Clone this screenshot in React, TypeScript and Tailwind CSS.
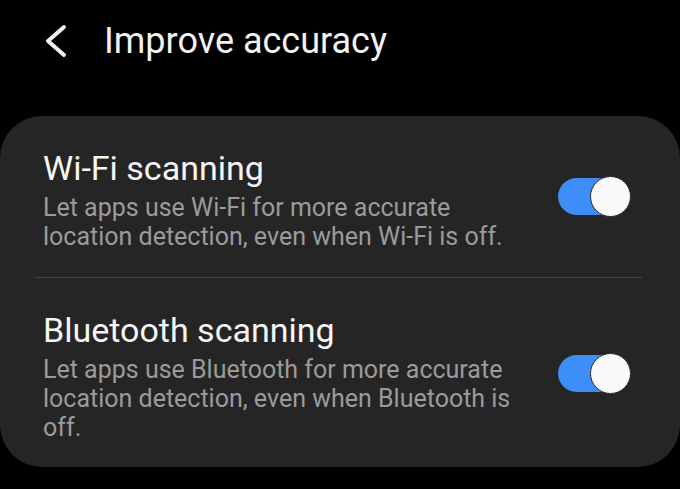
import React, { useState } from 'react'

function Toggle({ on, onChange, className = '' }: { on: boolean; onChange: () => void; className?: string }) {
  return (
    <button
      type="button"
      onClick={onChange}
      className={`relative h-[37px] w-[72px] shrink-0 rounded-full ${on ? 'bg-[#3e8ef7]' : 'bg-[#5a5a5a]'} ${className}`}
    >
      <span
        className={`absolute top-[-2px] h-[41px] w-[41px] rounded-full bg-[#fafafa] border border-[#2a2a2a] ${on ? 'right-[-1px]' : 'left-[-1px]'}`}
      />
    </button>
  )
}

function SettingRow({ title, desc, on, onChange }: { title: string; desc: string; on: boolean; onChange: () => void }) {
  return (
    <div className="flex items-center pl-[43px] pr-[50px]">
      <div className="w-[475px]">
        <div className="text-[34px] leading-[40px] text-[#f5f5f5]">{title}</div>
        <div className="mt-[5px] text-[25px] leading-[29px] text-[#9b9b9b]">{desc}</div>
      </div>
      <div className="flex-1" />
      <Toggle on={on} onChange={onChange} className="mt-[-6px]" />
    </div>
  )
}

export default function App() {
  const [wifi, setWifi] = useState(true)
  const [bt, setBt] = useState(true)

  return (
    <div className="h-[489px] w-[680px] overflow-hidden bg-black" style={{ fontFamily: 'Roboto, sans-serif' }}>
      {/* header */}
      <div className="flex h-[116px] items-start pt-[19px]">
        <div className="flex h-[44px] w-[104px] items-center pl-[44px]">
          <svg width="24" height="34" viewBox="0 0 24 34" fill="none">
            <path d="M20 3 L4 17 L20 31" stroke="#f2f2f2" strokeWidth="4" strokeLinecap="round" strokeLinejoin="round" />
          </svg>
        </div>
        <h1 className="text-[36px] leading-[44px] text-[#f2f2f2]">Improve accuracy</h1>
      </div>

      {/* settings card */}
      <div className="w-full rounded-[42px] bg-[#252525] pt-[32px] pb-[25px]">
        <SettingRow
          title="Wi-Fi scanning"
          desc="Let apps use Wi-Fi for more accurate location detection, even when Wi-Fi is off."
          on={wifi}
          onChange={() => setWifi(!wifi)}
        />
        <div className="ml-[35px] mr-[38px] mt-[26px] mb-[32px] h-px bg-[#444444]" />
        <SettingRow
          title="Bluetooth scanning"
          desc="Let apps use Bluetooth for more accurate location detection, even when Bluetooth is off."
          on={bt}
          onChange={() => setBt(!bt)}
        />
      </div>
    </div>
  )
}
